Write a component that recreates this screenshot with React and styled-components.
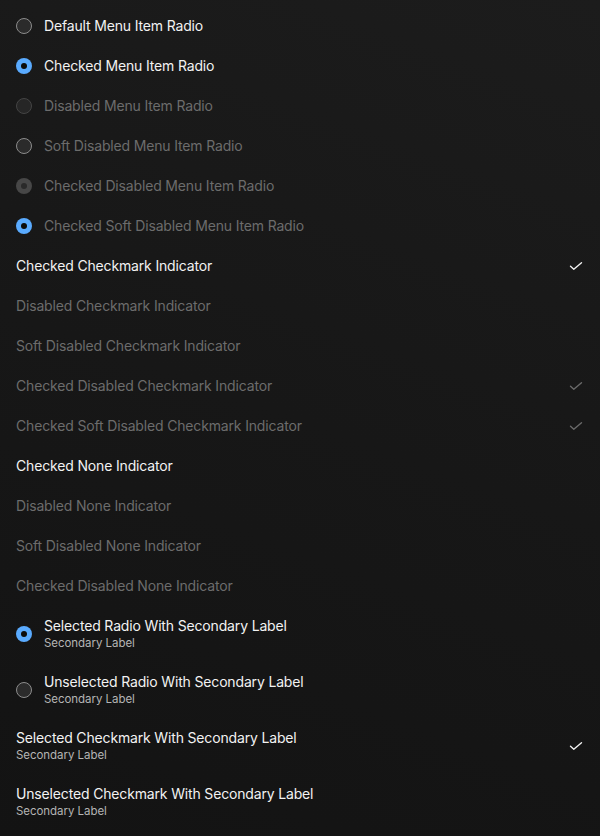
import React from 'react';
import styled, { createGlobalStyle, css } from 'styled-components';

const GlobalStyle = createGlobalStyle`
  html, body {
    margin: 0;
    padding: 0;
    background: #171717;
  }
  body {
    font-family: Inter, "Noto Sans", sans-serif;
    -webkit-font-smoothing: antialiased;
  }
`;

const items = [
  { kind: 'radio', label: 'Default Menu Item Radio', state: 'default' },
  { kind: 'radio', label: 'Checked Menu Item Radio', state: 'checked' },
  { kind: 'radio', label: 'Disabled Menu Item Radio', state: 'disabled', muted: true },
  { kind: 'radio', label: 'Soft Disabled Menu Item Radio', state: 'default', muted: true },
  { kind: 'radio', label: 'Checked Disabled Menu Item Radio', state: 'checkedDisabled', muted: true },
  { kind: 'radio', label: 'Checked Soft Disabled Menu Item Radio', state: 'checked', muted: true },
  { kind: 'check', label: 'Checked Checkmark Indicator', checked: true },
  { kind: 'check', label: 'Disabled Checkmark Indicator', muted: true },
  { kind: 'check', label: 'Soft Disabled Checkmark Indicator', muted: true },
  { kind: 'check', label: 'Checked Disabled Checkmark Indicator', checked: true, muted: true },
  { kind: 'check', label: 'Checked Soft Disabled Checkmark Indicator', checked: true, muted: true },
  { kind: 'none', label: 'Checked None Indicator' },
  { kind: 'none', label: 'Disabled None Indicator', muted: true },
  { kind: 'none', label: 'Soft Disabled None Indicator', muted: true },
  { kind: 'none', label: 'Checked Disabled None Indicator', muted: true },
  { kind: 'radio', label: 'Selected Radio With Secondary Label', state: 'checked', secondary: 'Secondary Label' },
  { kind: 'radio', label: 'Unselected Radio With Secondary Label', state: 'default', secondary: 'Secondary Label' },
  { kind: 'check', label: 'Selected Checkmark With Secondary Label', checked: true, secondary: 'Secondary Label' },
  { kind: 'check', label: 'Unselected Checkmark With Secondary Label', secondary: 'Secondary Label' },
];

const CheckIcon = ({ muted }) => (
  <svg width="16" height="16" viewBox="0 0 16 16" fill="none">
    <path
      d="M2.5 8.3 L5.8 11.2 L13.5 4.8"
      stroke={muted ? '#6a6a6a' : '#f2f2f2'}
      strokeWidth="1.4"
      strokeLinecap="round"
      strokeLinejoin="round"
    />
  </svg>
);

const App = () => {
  return (
    <Page>
      <GlobalStyle />
      <Menu>
        {items.map((item) => (
          <Row key={item.label} tall={!!item.secondary}>
            {item.kind === 'radio' && <Radio state={item.state} />}
            <Labels>
              <Label muted={item.muted}>{item.label}</Label>
              {item.secondary && <Secondary>{item.secondary}</Secondary>}
            </Labels>
            {item.kind === 'check' && (
              <Indicator>{item.checked && <CheckIcon muted={item.muted} />}</Indicator>
            )}
          </Row>
        ))}
      </Menu>
    </Page>
  );
};

export default App;

// 전체 배경
const Page = styled.div`
  min-height: 836px;
  background: linear-gradient(200deg, #1c1c1c 0%, #171717 50%, #131313 100%);
  box-sizing: border-box;
  padding-top: 6px;
`;

const Menu = styled.div`
  display: flex;
  flex-direction: column;
`;

const Row = styled.div`
  display: flex;
  align-items: center;
  gap: 12px;
  height: ${(props) => (props.tall ? '56px' : '40px')};
  padding: 0 16px;
  box-sizing: border-box;
`;

const Labels = styled.div`
  display: flex;
  flex-direction: column;
  flex: 1;
  min-width: 0;
`;

const Label = styled.div`
  font-size: 14px;
  line-height: 18px;
  letter-spacing: -0.16px;
  color: ${(props) => (props.muted ? '#6c6c6c' : '#f2f2f2')};
  white-space: nowrap;
`;

const Secondary = styled.div`
  font-size: 11.5px;
  line-height: 16px;
  letter-spacing: -0.05px;
  color: #b4b4b4;
`;

const Indicator = styled.div`
  width: 16px;
  height: 16px;
  display: flex;
  align-items: center;
  justify-content: center;
`;

const radioStyles = {
  default: css`
    background: #2b2b2b;
    border: 1.5px solid #8c8c8c;
  `,
  disabled: css`
    background: #262626;
    border: 1.5px solid #444;
  `,
  checked: css`
    background: #5aabff;
    border: none;
    &::after {
      content: '';
      width: 6px;
      height: 6px;
      border-radius: 50%;
      background: #0c0c0c;
    }
  `,
  checkedDisabled: css`
    background: #474747;
    border: none;
    &::after {
      content: '';
      width: 6px;
      height: 6px;
      border-radius: 50%;
      background: #2a2a2a;
    }
  `,
};

// 라디오 동그라미
const Radio = styled.span`
  flex: none;
  width: 16px;
  height: 16px;
  border-radius: 50%;
  box-sizing: border-box;
  display: flex;
  align-items: center;
  justify-content: center;
  ${(props) => radioStyles[props.state]}
`;
